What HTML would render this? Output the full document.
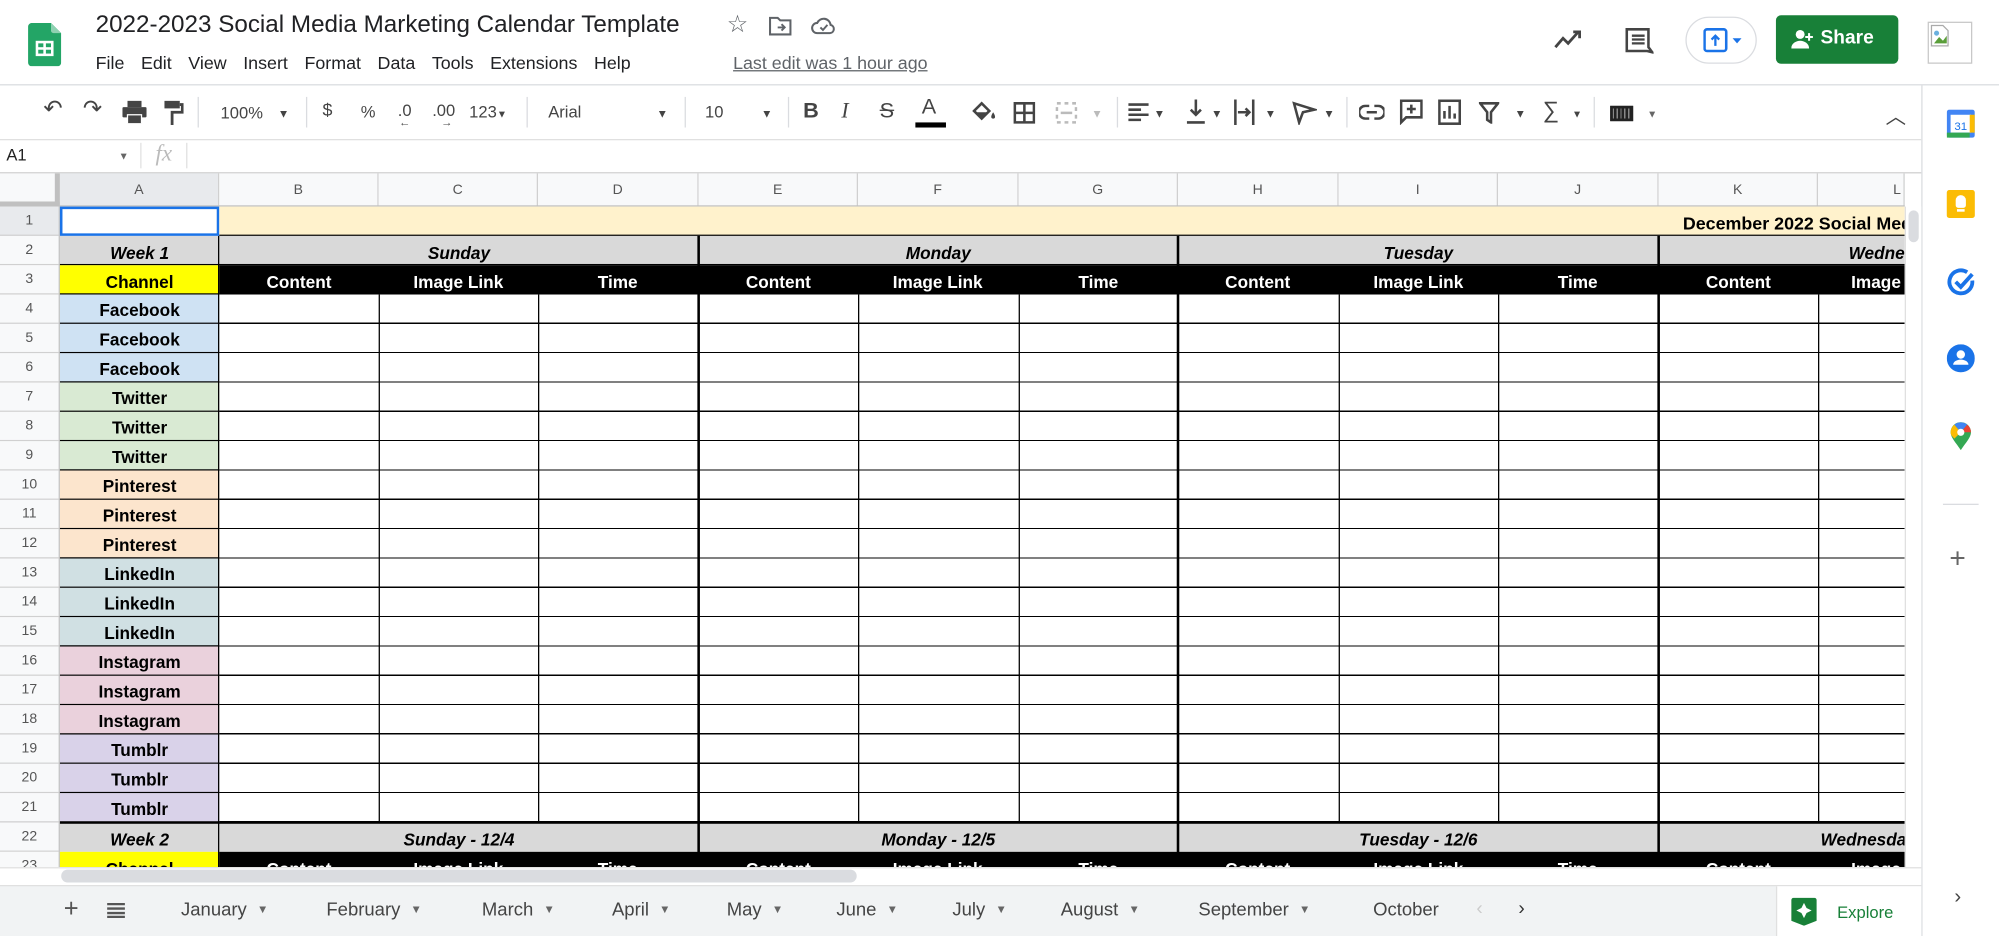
<!DOCTYPE html>
<html><head><meta charset="utf-8">
<style>
*{margin:0;padding:0;box-sizing:border-box}
html,body{width:1999px;height:936px;overflow:hidden;background:#fff;font-family:"Liberation Sans",Arial,sans-serif}
#w{position:absolute;left:0;top:0;width:1568px;height:734px;transform:scale(1.2749,1.2752);transform-origin:0 0;overflow:hidden}
.a{position:absolute}
.t{position:absolute;white-space:nowrap}
.menu span{margin-right:13px}
.tb{position:absolute;top:78px;font-size:14px;color:#444;white-space:nowrap}
.sep{position:absolute;top:76px;width:1px;height:24px;background:#dadce0}
.ch{position:absolute;top:136px;height:26px;font-size:11px;color:#555;text-align:center;line-height:26px;border-right:1px solid #d0d0d0;background:#f8f9fa}
.rh{position:absolute;left:0;width:46px;height:23px;font-size:11px;color:#555;text-align:center;line-height:23px;border-bottom:1px solid #d0d0d0;background:#f8f9fa}
.ca{position:absolute;left:47px;width:125px;height:23px;font-size:13.5px;font-weight:bold;text-align:center;line-height:26px;color:#000;border-bottom:1px solid #000}
.vl{position:absolute;top:231px;height:449px;width:1px;background:#000}
.vk{position:absolute;top:185px;height:495px;width:2px;background:#000}
.day{position:absolute;height:23px;font-size:13.5px;font-weight:bold;font-style:italic;text-align:center;line-height:27px}
.hd{position:absolute;height:23px;font-size:13.5px;font-weight:bold;color:#fff;text-align:center;line-height:27px;width:125px}
.tab{position:absolute;top:706px;font-size:14.5px;color:#444}
.tab i{font-style:normal;font-size:9px;color:#666;margin-left:8px;vertical-align:2px}
</style></head><body><div id="w">

<svg class="a" style="left:22px;top:18px" width="26" height="34" viewBox="0 0 26 34"><path d="M3 0h15l8 8v23a3 3 0 0 1-3 3H3a3 3 0 0 1-3-3V3a3 3 0 0 1 3-3z" fill="#23a566"/><path d="M18 0l8 8h-6a2 2 0 0 1-2-2z" fill="#8ed1b1"/><rect x="6" y="14" width="14" height="12" fill="#fff"/><rect x="8" y="16" width="4" height="3" fill="#23a566"/><rect x="14" y="16" width="4" height="3" fill="#23a566"/><rect x="8" y="21" width="4" height="3" fill="#23a566"/><rect x="14" y="21" width="4" height="3" fill="#23a566"/></svg>
<div class="t" style="left:75px;top:9px;font-size:19px;color:#202124">2022-2023 Social Media Marketing Calendar Template</div>
<div class="t" style="left:570px;top:8px;font-size:19px;color:#5f6368">☆</div>
<svg class="a" style="left:603px;top:12px" width="18" height="16" viewBox="0 0 18 16"><path d="M1 2h6l2 2h8v11H1z" fill="none" stroke="#5f6368" stroke-width="1.6"/><path d="M7 9.5h5M10 7l2.5 2.5L10 12" fill="none" stroke="#5f6368" stroke-width="1.5"/></svg>
<svg class="a" style="left:636px;top:12px" width="20" height="16" viewBox="0 0 20 16"><path d="M5 14a4 4 0 0 1 0-8 5.5 5.5 0 0 1 10.5 1.5A3.3 3.3 0 0 1 15 14z" fill="none" stroke="#5f6368" stroke-width="1.6"/><path d="M7.5 9.5l2 2 3.5-4" fill="none" stroke="#5f6368" stroke-width="1.5"/></svg>
<div class="t menu" style="left:75px;top:41px;font-size:14px;color:#202124"><span>File</span><span>Edit</span><span>View</span><span>Insert</span><span>Format</span><span>Data</span><span>Tools</span><span>Extensions</span><span>Help</span></div>
<div class="t" style="left:575px;top:41px;font-size:14px;color:#5f6368;text-decoration:underline">Last edit was 1 hour ago</div>

<svg class="a" style="left:1218px;top:21px" width="24" height="20" viewBox="0 0 24 20"><path d="M2 16l6-7 4 4 8-9" fill="none" stroke="#444" stroke-width="2.2"/><path d="M16 4h5v5" fill="none" stroke="#444" stroke-width="2.2"/></svg>
<svg class="a" style="left:1273px;top:20px" width="24" height="24" viewBox="0 0 24 24"><path d="M3 3h17v14l3 4-4-1H3z" fill="none" stroke="#444" stroke-width="2"/><path d="M7 8h10M7 11h10M7 14h10" stroke="#444" stroke-width="1.8"/></svg>
<div class="a" style="left:1322px;top:13px;width:56px;height:37px;border:1px solid #dadce0;border-radius:19px;background:#fff"></div>
<svg class="a" style="left:1336px;top:22px" width="36" height="20" viewBox="0 0 36 20"><rect x="1" y="1" width="17" height="17" rx="2" fill="none" stroke="#1a73e8" stroke-width="2"/><path d="M9.5 14V6M6.5 9l3-3 3 3" fill="none" stroke="#1a73e8" stroke-width="1.8"/><path d="M23 8h7l-3.5 4z" fill="#1a73e8"/></svg>
<div class="a" style="left:1393px;top:12px;width:96px;height:38px;background:#188038;border-radius:4px"></div>
<svg class="a" style="left:1405px;top:22px" width="18" height="18" viewBox="0 0 18 18"><circle cx="7" cy="5" r="3.5" fill="#fff"/><path d="M0 16c0-4 4-6 7-6s7 2 7 6z" fill="#fff"/><path d="M14 4v6M11 7h6" stroke="#fff" stroke-width="1.6"/></svg>
<div class="t" style="left:1428px;top:21px;font-size:15px;font-weight:bold;color:#fff">Share</div>
<div class="a" style="left:1512px;top:17px;width:35px;height:33px;border:1px solid #c8c8c8;background:#fff"></div>
<svg class="a" style="left:1514px;top:19px" width="16" height="18" viewBox="0 0 16 18"><path d="M1 1h9l4 4v12H1z" fill="#fff" stroke="#aaa"/><path d="M3 15l4-5 3 3 3-4v6z" fill="#5a9e3a"/><circle cx="5" cy="7" r="2" fill="#6ab0de"/></svg>

<div class="a" style="left:0;top:66px;width:1568px;height:1px;background:#dadce0"></div>
<div class="a" style="left:1507px;top:67px;width:1px;height:667px;background:#dadce0"></div>
<svg class="a" style="left:1527px;top:86px" width="22" height="22" viewBox="0 0 22 22"><rect x="0" y="0" width="22" height="22" rx="2" fill="#4285f4"/><rect x="3" y="4" width="16" height="14" fill="#fff"/><rect x="0" y="18" width="18" height="4" fill="#34a853"/><path d="M18 4h4v14h-4z" fill="#fbbc04"/><text x="11" y="16" font-size="9" font-family="Liberation Sans" fill="#1a73e8" text-anchor="middle">31</text></svg>
<div class="a" style="left:1527px;top:149px;width:22px;height:22px;background:#fbbc04;border-radius:2px"></div>
<div class="a" style="left:1534px;top:153px;width:8px;height:10px;background:#fff;border-radius:4px 4px 2px 2px"></div>
<div class="a" style="left:1535px;top:164px;width:6px;height:2px;background:#fff"></div>
<svg class="a" style="left:1527px;top:210px" width="24" height="24" viewBox="0 0 24 24"><path d="M20 10a9 9 0 1 1-4-6.5" fill="none" stroke="#1a73e8" stroke-width="3"/><path d="M7 11l4 4 9-10" fill="none" stroke="#1a73e8" stroke-width="3"/></svg>
<svg class="a" style="left:1527px;top:270px" width="22" height="22" viewBox="0 0 22 22"><circle cx="11" cy="11" r="11" fill="#1a73e8"/><circle cx="11" cy="8" r="3.3" fill="#fff"/><path d="M5 16c0-3 4-4 6-4s6 1 6 4z" fill="#fff"/></svg>
<svg class="a" style="left:1530px;top:331px" width="16" height="22" viewBox="0 0 16 22"><path d="M8 22C4 16 0 12 0 8a8 8 0 0 1 16 0c0 4-4 8-8 14z" fill="#34a853"/><path d="M0 8a8 8 0 0 1 3-6l5 6-5 5C1 11 0 10 0 8z" fill="#fbbc04"/><path d="M3 2a8 8 0 0 1 10 0L8 8z" fill="#4285f4"/><path d="M13 2a8 8 0 0 1 3 6L8 8z" fill="#ea4335"/><circle cx="8" cy="8" r="2.8" fill="#fff"/></svg>
<div class="a" style="left:1524px;top:395px;width:28px;height:1px;background:#dadce0"></div>
<div class="t" style="left:1529px;top:425px;font-size:22px;color:#666">+</div>
<div class="t" style="left:1533px;top:695px;font-size:16px;color:#444">›</div>

<div class="tb" style="left:34px;font-size:18px;top:75px">↶</div>
<div class="tb" style="left:65px;font-size:18px;top:75px">↷</div>
<svg class="a" style="left:96px;top:79px" width="19" height="18" viewBox="0 0 19 18"><rect x="4" y="0" width="11" height="5" fill="#444"/><rect x="0" y="5" width="19" height="8" rx="1" fill="#444"/><rect x="4" y="11" width="11" height="7" fill="#444" stroke="#fff"/></svg>
<svg class="a" style="left:128px;top:79px" width="16" height="19" viewBox="0 0 16 19"><rect x="1" y="0" width="12" height="6" fill="#444"/><path d="M13 3h2v6H7v10" fill="none" stroke="#444" stroke-width="2.2"/></svg>
<div class="sep" style="left:155px"></div>
<div class="tb" style="left:173px;font-size:13px;top:81px">100%</div><div class="tb" style="left:218px;font-size:9px;top:84px">▼</div>
<div class="sep" style="left:240px"></div>
<div class="tb" style="left:253px">$</div><div class="tb" style="left:283px;font-size:13px;top:80px">%</div>
<div class="tb" style="left:312px;font-size:13px;top:79px">.0</div><div class="tb" style="left:313px;font-size:9px;top:91px">←</div>
<div class="tb" style="left:339px;font-size:13px;top:79px">.00</div><div class="tb" style="left:346px;font-size:9px;top:91px">→</div>
<div class="tb" style="left:368px;font-size:13px;top:80px">123<span style="font-size:8px">▼</span></div>
<div class="sep" style="left:413px"></div>
<div class="tb" style="left:430px;font-size:13px;top:80px">Arial</div><div class="tb" style="left:515px;font-size:9px;top:84px">▼</div>
<div class="sep" style="left:537px"></div>
<div class="tb" style="left:553px;font-size:13px;top:80px">10</div><div class="tb" style="left:597px;font-size:9px;top:84px">▼</div>
<div class="sep" style="left:618px"></div>
<div class="tb" style="left:630px;font-size:17px;font-weight:bold;top:77px">B</div>
<div class="tb" style="left:660px;font-size:17px;font-style:italic;font-family:'Liberation Serif';top:77px">I</div>
<div class="tb" style="left:690px;font-size:17px;text-decoration:line-through;top:77px">S</div>
<div class="tb" style="left:723px;font-size:17px;top:74px">A</div><div class="a" style="left:718px;top:96px;width:24px;height:4px;background:#000"></div>
<svg class="a" style="left:762px;top:79px" width="20" height="17" viewBox="0 0 20 17"><path d="M2 8l6-6 6 6-6 6z" fill="none" stroke="#444" stroke-width="2"/><path d="M3 9h10l-5 5z" fill="#444"/><path d="M17 9c-2 3-2 5 0 5s2-2 0-5z" fill="#444"/></svg>
<svg class="a" style="left:795px;top:80px" width="17" height="17" viewBox="0 0 17 17"><path d="M1 1h15v15H1zM8.5 1v15M1 8.5h15" fill="none" stroke="#444" stroke-width="2"/></svg>
<svg class="a" style="left:828px;top:80px" width="17" height="17" viewBox="0 0 17 17"><path d="M1 1h15v15H1z" fill="none" stroke="#bbb" stroke-width="2" stroke-dasharray="3 3"/><path d="M4 8.5h9" stroke="#bbb" stroke-width="2"/></svg>
<div class="tb" style="left:856px;font-size:9px;top:84px;color:#bbb">▼</div>
<div class="sep" style="left:876px"></div>
<svg class="a" style="left:885px;top:80px" width="16" height="16" viewBox="0 0 16 16"><path d="M0 2h16M0 6h10M0 10h16M0 14h10" stroke="#444" stroke-width="2"/></svg><div class="tb" style="left:905px;font-size:9px;top:84px">▼</div>
<svg class="a" style="left:930px;top:78px" width="16" height="20" viewBox="0 0 16 20"><path d="M8 0v12M4 8l4 4 4-4M1 18h14" fill="none" stroke="#444" stroke-width="2"/></svg><div class="tb" style="left:950px;font-size:9px;top:84px">▼</div>
<svg class="a" style="left:967px;top:78px" width="18" height="20" viewBox="0 0 18 20"><path d="M2 0v20M16 0v20M4 10h9M10 7l3 3-3 3" fill="none" stroke="#444" stroke-width="2"/></svg><div class="tb" style="left:992px;font-size:9px;top:84px">▼</div>
<svg class="a" style="left:1013px;top:78px" width="20" height="20" viewBox="0 0 20 20"><path d="M2 3l16 5-9 2-3 8z" fill="none" stroke="#444" stroke-width="2"/></svg><div class="tb" style="left:1038px;font-size:9px;top:84px">▼</div>
<div class="sep" style="left:1056px"></div>
<svg class="a" style="left:1066px;top:82px" width="20" height="12" viewBox="0 0 20 12"><path d="M8 1H5a5 5 0 0 0 0 10h3M12 1h3a5 5 0 0 1 0 10h-3M6 6h8" fill="none" stroke="#444" stroke-width="2"/></svg>
<svg class="a" style="left:1098px;top:78px" width="18" height="20" viewBox="0 0 18 20"><path d="M1 1h16v13H5l-4 4z" fill="none" stroke="#444" stroke-width="2"/><path d="M9 4v7M5.5 7.5h7" stroke="#444" stroke-width="2"/></svg>
<svg class="a" style="left:1128px;top:78px" width="18" height="20" viewBox="0 0 18 20"><rect x="1" y="1" width="16" height="18" fill="none" stroke="#444" stroke-width="2"/><path d="M5 15V9M9 15V5M13 15v-4" stroke="#444" stroke-width="2"/></svg>
<svg class="a" style="left:1160px;top:80px" width="16" height="17" viewBox="0 0 16 17"><path d="M1 1h14L9.5 8v8L6.5 14V8z" fill="none" stroke="#444" stroke-width="2"/></svg><div class="tb" style="left:1188px;font-size:9px;top:84px">▼</div>
<div class="tb" style="left:1210px;font-size:18px;top:76px">∑</div><div class="tb" style="left:1233px;font-size:8px;top:85px">▼</div>
<div class="sep" style="left:1250px"></div>
<div class="a" style="left:1263px;top:83px;width:18px;height:12px;background:#222;border:2px solid #222;background-image:repeating-linear-gradient(90deg,#888 0 1px,#222 1px 3px)"></div><div class="tb" style="left:1292px;font-size:8px;top:85px;color:#666">▼</div>
<div class="tb" style="left:1479px;font-size:16px;top:78px">︿</div>

<div class="a" style="left:0;top:109px;width:1507px;height:1px;background:#e0e0e0"></div>
<div class="t" style="left:5px;top:114px;font-size:13px;color:#222">A1</div>
<div class="t" style="left:93px;top:118px;font-size:8px;color:#666">▼</div>
<div class="a" style="left:110px;top:112px;width:1px;height:20px;background:#e0e0e0"></div>
<div class="t" style="left:122px;top:110px;font-size:18px;font-style:italic;color:#bbb;font-family:'Liberation Serif'">fx</div>
<div class="a" style="left:146px;top:112px;width:1px;height:20px;background:#e0e0e0"></div>
<div class="a" style="left:0;top:135px;width:1507px;height:1px;background:#d0d0d0"></div>

<div class="a" style="left:0;top:136px;width:47px;height:26px;background:#f8f9fa;border-right:4px solid #c0c0c0;border-bottom:4px solid #c0c0c0"></div>
<div class="ch" style="left:47px;width:125px;background:#e8eaed">A</div>
<div class="ch" style="left:172px;width:125px">B</div>
<div class="ch" style="left:297px;width:125px">C</div>
<div class="ch" style="left:422px;width:126px">D</div>
<div class="ch" style="left:548px;width:125px">E</div>
<div class="ch" style="left:673px;width:126px">F</div>
<div class="ch" style="left:799px;width:125px">G</div>
<div class="ch" style="left:924px;width:126px">H</div>
<div class="ch" style="left:1050px;width:125px">I</div>
<div class="ch" style="left:1175px;width:126px">J</div>
<div class="ch" style="left:1301px;width:125px">K</div>
<div class="ch" style="left:1426px;width:68px;text-align:right;padding-right:2px">L</div>
<div class="a" style="left:0;top:161px;width:1494px;height:1px;background:#c0c0c0"></div>

<div class="rh" style="top:162px;background:#e8eaed">1</div><div class="rh" style="top:185px">2</div><div class="rh" style="top:208px">3</div><div class="rh" style="top:231px">4</div><div class="rh" style="top:254px">5</div><div class="rh" style="top:277px">6</div><div class="rh" style="top:300px">7</div><div class="rh" style="top:323px">8</div><div class="rh" style="top:346px">9</div><div class="rh" style="top:369px">10</div><div class="rh" style="top:392px">11</div><div class="rh" style="top:415px">12</div><div class="rh" style="top:438px">13</div><div class="rh" style="top:461px">14</div><div class="rh" style="top:484px">15</div><div class="rh" style="top:507px">16</div><div class="rh" style="top:530px">17</div><div class="rh" style="top:553px">18</div><div class="rh" style="top:576px">19</div><div class="rh" style="top:599px">20</div><div class="rh" style="top:622px">21</div><div class="rh" style="top:645px">22</div><div class="rh" style="top:668px">23</div>
<div class="a" style="left:46px;top:162px;width:1px;height:518px;background:#c0c0c0"></div>

<div class="a" style="left:47px;top:162px;width:125px;height:23px;border:2px solid #1a73e8;background:#fff"></div>
<div class="a" style="left:172px;top:162px;width:1322px;height:23px;background:#fff2cc;border-bottom:1px solid #000"></div>
<div class="t" style="left:1320px;top:167px;font-size:14px;font-weight:bold;width:174px;overflow:hidden">December 2022 Social Media Marketing</div>

<div class="a" style="left:47px;top:185px;width:1447px;height:23px;background:#d9d9d9;border-bottom:1px solid #000"></div>
<div class="day" style="left:47px;width:125px;top:185px">Week 1</div>
<div class="day" style="left:172px;width:376px;top:185px">Sunday</div>
<div class="day" style="left:548px;width:376px;top:185px">Monday</div>
<div class="day" style="left:924px;width:377px;top:185px">Tuesday</div>
<div class="day" style="left:1301px;width:193px;overflow:hidden;text-align:left;padding-left:149px;top:185px">Wednesday</div>

<div class="a" style="left:47px;top:208px;width:125px;height:23px;background:#ffff00;border-bottom:1px solid #000"></div>
<div class="day" style="left:47px;width:125px;top:208px;font-style:normal">Channel</div>
<div class="a" style="left:172px;top:208px;width:1322px;height:23px;background:#000"></div>
<div class="hd" style="left:172px;top:208px">Content</div><div class="hd" style="left:297px;top:208px">Image Link</div><div class="hd" style="left:422px;top:208px">Time</div>
<div class="hd" style="left:548px;top:208px">Content</div><div class="hd" style="left:673px;top:208px">Image Link</div><div class="hd" style="left:799px;top:208px">Time</div>
<div class="hd" style="left:924px;top:208px">Content</div><div class="hd" style="left:1050px;top:208px">Image Link</div><div class="hd" style="left:1175px;top:208px">Time</div>
<div class="hd" style="left:1301px;top:208px">Content</div><div class="a" style="left:1426px;top:208px;width:68px;height:23px;overflow:hidden"><div class="hd" style="left:0;top:0;text-align:left;padding-left:26px">Image Link</div></div>

<div class="a" style="left:172px;top:231px;width:1322px;height:414px;background:repeating-linear-gradient(to bottom,#fff 0 22px,#000 22px 23px)"></div>
<div class="ca" style="top:231px;background:#cfe2f3">Facebook</div>
<div class="ca" style="top:254px;background:#cfe2f3">Facebook</div>
<div class="ca" style="top:277px;background:#cfe2f3">Facebook</div>
<div class="ca" style="top:300px;background:#d9ead3">Twitter</div>
<div class="ca" style="top:323px;background:#d9ead3">Twitter</div>
<div class="ca" style="top:346px;background:#d9ead3">Twitter</div>
<div class="ca" style="top:369px;background:#fce5cd">Pinterest</div>
<div class="ca" style="top:392px;background:#fce5cd">Pinterest</div>
<div class="ca" style="top:415px;background:#fce5cd">Pinterest</div>
<div class="ca" style="top:438px;background:#d0e0e3">LinkedIn</div>
<div class="ca" style="top:461px;background:#d0e0e3">LinkedIn</div>
<div class="ca" style="top:484px;background:#d0e0e3">LinkedIn</div>
<div class="ca" style="top:507px;background:#ead1dc">Instagram</div>
<div class="ca" style="top:530px;background:#ead1dc">Instagram</div>
<div class="ca" style="top:553px;background:#ead1dc">Instagram</div>
<div class="ca" style="top:576px;background:#d9d2e9">Tumblr</div>
<div class="ca" style="top:599px;background:#d9d2e9">Tumblr</div>
<div class="ca" style="top:622px;background:#d9d2e9">Tumblr</div>

<div class="a" style="left:47px;top:645px;width:1447px;height:23px;background:#d9d9d9;border-top:1px solid #000"></div>
<div class="day" style="left:47px;width:125px;top:645px">Week 2</div>
<div class="day" style="left:172px;width:376px;top:645px">Sunday - 12/4</div>
<div class="day" style="left:548px;width:376px;top:645px">Monday - 12/5</div>
<div class="day" style="left:924px;width:377px;top:645px">Tuesday - 12/6</div>
<div class="a" style="left:1301px;top:645px;width:193px;height:23px;overflow:hidden"><div class="day" style="left:127px;top:0;width:150px;text-align:left">Wednesday - 12/7</div></div>
<div class="a" style="left:47px;top:668px;width:125px;height:12px;background:#ffff00;overflow:hidden"><div class="day" style="left:0;top:0;width:125px;font-style:normal">Channel</div></div>
<div class="a" style="left:172px;top:668px;width:1322px;height:12px;background:#000;overflow:hidden">
<div class="hd" style="left:0;top:0">Content</div><div class="hd" style="left:125px;top:0">Image Link</div><div class="hd" style="left:250px;top:0">Time</div>
<div class="hd" style="left:376px;top:0">Content</div><div class="hd" style="left:501px;top:0">Image Link</div><div class="hd" style="left:627px;top:0">Time</div>
<div class="hd" style="left:752px;top:0">Content</div><div class="hd" style="left:878px;top:0">Image Link</div><div class="hd" style="left:1003px;top:0">Time</div>
<div class="hd" style="left:1129px;top:0">Content</div><div class="hd" style="left:1254px;top:0;width:68px;text-align:left;padding-left:26px">Image</div></div>

<div class="a" style="left:171px;top:185px;width:1px;height:495px;background:#000"></div>
<div class="vl" style="left:297px;height:414px"></div><div class="vl" style="left:422px;height:414px"></div>
<div class="vl" style="left:673px;height:414px"></div><div class="vl" style="left:799px;height:414px"></div>
<div class="vl" style="left:1050px;height:414px"></div><div class="vl" style="left:1175px;height:414px"></div>
<div class="vl" style="left:1426px;height:414px"></div>
<div class="vk" style="left:547px"></div><div class="vk" style="left:923px"></div><div class="vk" style="left:1300px"></div>

<div class="a" style="left:1494px;top:162px;width:13px;height:518px;background:#fff;border-left:1px solid #e0e0e0"></div>
<div class="a" style="left:1497px;top:165px;width:8px;height:25px;background:#dadce0;border-radius:4px"></div>
<div class="a" style="left:0;top:680px;width:1507px;height:14px;background:#fff;border-top:1px solid #e0e0e0"></div>
<div class="a" style="left:48px;top:682px;width:624px;height:10px;background:#dadce0;border-radius:5px"></div>

<div class="a" style="left:0;top:694px;width:1507px;height:40px;background:#f1f3f4;border-top:1px solid #e0e0e0"></div>
<div class="t" style="left:50px;top:702px;font-size:20px;color:#555">+</div>
<svg class="a" style="left:84px;top:708px" width="14" height="12" viewBox="0 0 14 12"><path d="M0 1h14M0 4.5h14M0 8h14M0 11h14" stroke="#555" stroke-width="1.8"/></svg>
<div class="tab" style="left:142px">January<i>▼</i></div>
<div class="tab" style="left:256px">February<i>▼</i></div>
<div class="tab" style="left:378px">March<i>▼</i></div>
<div class="tab" style="left:480px">April<i>▼</i></div>
<div class="tab" style="left:570px">May<i>▼</i></div>
<div class="tab" style="left:656px">June<i>▼</i></div>
<div class="tab" style="left:747px">July<i>▼</i></div>
<div class="tab" style="left:832px">August<i>▼</i></div>
<div class="tab" style="left:940px">September<i>▼</i></div>
<div class="tab" style="left:1077px">October</div>
<div class="t" style="left:1158px;top:704px;font-size:15px;color:#ccc">‹</div>
<div class="t" style="left:1191px;top:704px;font-size:15px;color:#333">›</div>
<div class="a" style="left:1393px;top:695px;width:114px;height:39px;background:#fff;border-left:1px solid #e0e0e0"></div>
<svg class="a" style="left:1405px;top:704px" width="20" height="22" viewBox="0 0 20 22"><path d="M2 0h16a2 2 0 0 1 2 2v16l-10 4L0 18V2a2 2 0 0 1 2-2z" fill="#188038"/><path d="M10 4l2 4 4 2-4 2-2 4-2-4-4-2 4-2z" fill="#fff"/></svg>
<div class="t" style="left:1441px;top:708px;font-size:13px;color:#188038">Explore</div>
</div></body></html>
